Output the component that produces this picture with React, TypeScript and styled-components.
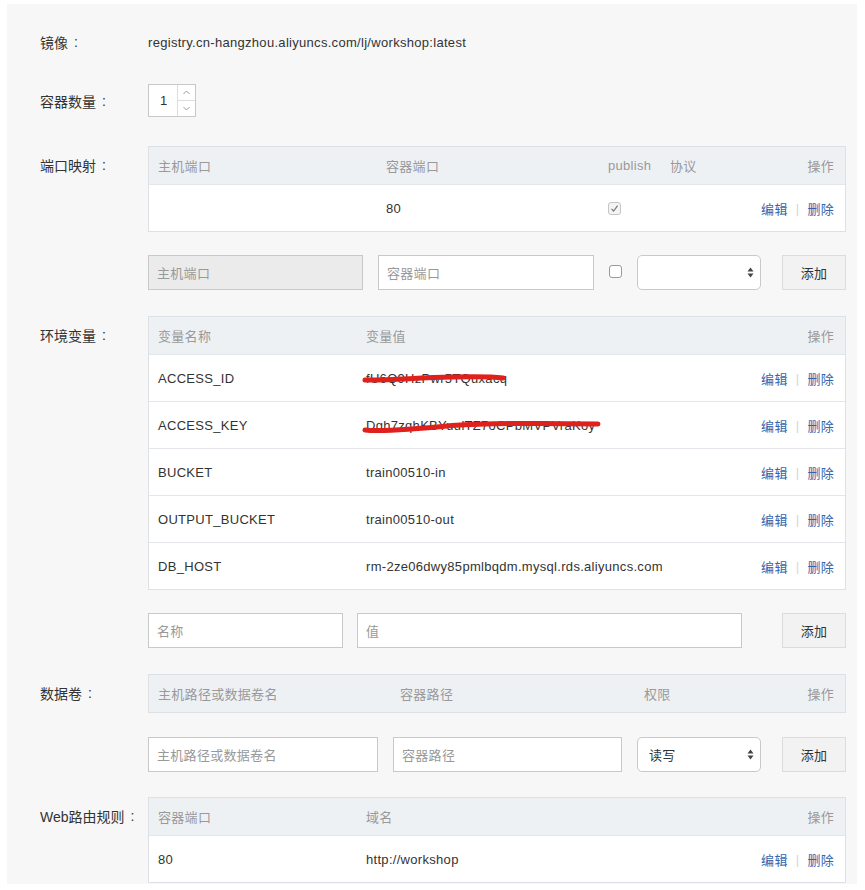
import React from 'react';
import styled, { createGlobalStyle } from 'styled-components';

const GlobalStyle = createGlobalStyle`
  body {
    margin: 0;
    background: #ffffff;
    font-family: "Liberation Sans", "Noto Sans CJK SC", sans-serif;
    color: #333;
    letter-spacing: 0.3px;
  }
`;

type PortRow = { host: string; container: string; publish: boolean };
type EnvRow = { name: string; value: string; masked?: 'short' | 'long' };
type WebRow = { port: string; domain: string };

const ports: PortRow[] = [{ host: '', container: '80', publish: true }];

const envs: EnvRow[] = [
  { name: 'ACCESS_ID', value: 'fU6Q9HzPwr5TQuxacq', masked: 'short' },
  { name: 'ACCESS_KEY', value: 'Dgh7zqhKBYuulTZ7oCPbMVPVraKoy', masked: 'long' },
  { name: 'BUCKET', value: 'train00510-in' },
  { name: 'OUTPUT_BUCKET', value: 'train00510-out' },
  { name: 'DB_HOST', value: 'rm-2ze06dwy85pmlbqdm.mysql.rds.aliyuncs.com' },
];

const routes: WebRow[] = [{ port: '80', domain: 'http://workshop' }];

function Actions() {
  return (
    <ActionGroup>
      <ActionLink>编辑</ActionLink>
      <ActionSep>|</ActionSep>
      <ActionLink>删除</ActionLink>
    </ActionGroup>
  );
}

function SelectCaret() {
  return (
    <svg width="7" height="11" viewBox="0 0 7 11">
      <path d="M3.5 0.5 L6.5 4.5 L0.5 4.5 Z" fill="#444" />
      <path d="M3.5 10.5 L6.5 6.5 L0.5 6.5 Z" fill="#444" />
    </svg>
  );
}

// scribble that hides the secret values
function Scribble({ kind }: { kind: 'short' | 'long' }) {
  if (kind === 'short') {
    return (
      <ScribbleSvg width="146" height="16" viewBox="0 0 146 16" style={{ left: -4, top: 0 }}>
        <path
          d="M3 9 C 30 9.5, 55 6.5, 90 6 C 115 5.5, 130 5.5, 141 7"
          stroke="#e0201c"
          strokeWidth="5"
          strokeLinecap="round"
          fill="none"
        />
      </ScribbleSvg>
    );
  }
  return (
    <ScribbleSvg width="240" height="18" viewBox="0 0 240 18" style={{ left: -4, top: 0 }}>
      <path
        d="M3 12 C 20 14, 55 11, 90 7.5 C 130 5, 180 5, 236 6"
        stroke="#e0201c"
        strokeWidth="5"
        strokeLinecap="round"
        fill="none"
      />
    </ScribbleSvg>
  );
}

export default function App() {
  return (
    <>
      <GlobalStyle />
      <Panel>
        {/* 镜像 */}
        <FormRow>
          <Label $h={28}>
            镜像<Colon>:</Colon>
          </Label>
          <ImageValue>registry.cn-hangzhou.aliyuncs.com/lj/workshop:latest</ImageValue>
        </FormRow>

        {/* 容器数量 */}
        <FormRow $mt={28}>
          <Label $h={33}>
            容器数量<Colon>:</Colon>
          </Label>
          <Spinner>
            <SpinnerValue>1</SpinnerValue>
            <SpinnerArrows>
              <SpinnerBtn>
                <svg width="7" height="5" viewBox="0 0 7 5">
                  <path d="M0.5 4 L3.5 1 L6.5 4" stroke="#999" fill="none" />
                </svg>
              </SpinnerBtn>
              <SpinnerBtn $bottom>
                <svg width="7" height="5" viewBox="0 0 7 5">
                  <path d="M0.5 1 L3.5 4 L6.5 1" stroke="#999" fill="none" />
                </svg>
              </SpinnerBtn>
            </SpinnerArrows>
          </Spinner>
        </FormRow>

        {/* 端口映射 */}
        <FormRow $mt={29}>
          <Label $h={38}>
            端口映射<Colon>:</Colon>
          </Label>
          <div>
            <Table>
              <HeadRow $cols="228px 222px 62px 1fr 100px">
                <Cell>主机端口</Cell>
                <Cell>容器端口</Cell>
                <Cell>publish</Cell>
                <Cell>协议</Cell>
                <Cell $right>操作</Cell>
              </HeadRow>
              {ports.map((p, i) => (
                <BodyRow key={i} $cols="228px 222px 62px 1fr 100px">
                  <Cell>{p.host}</Cell>
                  <Cell>{p.container}</Cell>
                  <Cell>
                    <CheckBox $checked={p.publish}>
                      {p.publish && (
                        <svg width="9" height="9" viewBox="0 0 9 9">
                          <path d="M1.5 4.8 L3.6 7 L7.6 1.6" stroke="#777" strokeWidth="1.2" fill="none" />
                        </svg>
                      )}
                    </CheckBox>
                  </Cell>
                  <Cell />
                  <Cell $right>
                    <Actions />
                  </Cell>
                </BodyRow>
              ))}
            </Table>
            <AddRow $cols="215px 216px 13px 124px 1fr" $gap={15}>
              <Field $disabled>主机端口</Field>
              <Field>容器端口</Field>
              <CheckBox />
              <SelectBox>
                <span />
                <SelectCaret />
              </SelectBox>
              <AddButton>添加</AddButton>
            </AddRow>
          </div>
        </FormRow>

        {/* 环境变量 */}
        <FormRow $mt={26}>
          <Label $h={38}>
            环境变量<Colon>:</Colon>
          </Label>
          <div>
            <Table>
              <HeadRow $cols="208px 1fr 120px">
                <Cell>变量名称</Cell>
                <Cell>变量值</Cell>
                <Cell $right>操作</Cell>
              </HeadRow>
              {envs.map((e) => (
                <BodyRow key={e.name} $cols="208px 1fr 120px">
                  <Cell>{e.name}</Cell>
                  <Cell>
                    <Secret>
                      {e.value}
                      {e.masked && <Scribble kind={e.masked} />}
                    </Secret>
                  </Cell>
                  <Cell $right>
                    <Actions />
                  </Cell>
                </BodyRow>
              ))}
            </Table>
            <AddRow $cols="195px 385px 1fr">
              <Field>名称</Field>
              <Field>值</Field>
              <AddButton>添加</AddButton>
            </AddRow>
          </div>
        </FormRow>

        {/* 数据卷 */}
        <FormRow $mt={26}>
          <Label $h={38}>
            数据卷<Colon>:</Colon>
          </Label>
          <div>
            <Table>
              <HeadRow $cols="242px 244px 1fr 120px">
                <Cell>主机路径或数据卷名</Cell>
                <Cell>容器路径</Cell>
                <Cell>权限</Cell>
                <Cell $right>操作</Cell>
              </HeadRow>
            </Table>
            <AddRow $cols="230px 229px 124px 1fr" $gap={15} $mt={24}>
              <Field>主机路径或数据卷名</Field>
              <Field>容器路径</Field>
              <SelectBox>
                <SelectText>读写</SelectText>
                <SelectCaret />
              </SelectBox>
              <AddButton>添加</AddButton>
            </AddRow>
          </div>
        </FormRow>

        {/* Web路由规则 */}
        <FormRow $mt={25}>
          <Label $h={38}>
            Web路由规则<Colon>:</Colon>
          </Label>
          <Table>
            <HeadRow $cols="208px 1fr 120px">
              <Cell>容器端口</Cell>
              <Cell>域名</Cell>
              <Cell $right>操作</Cell>
            </HeadRow>
            {routes.map((r, i) => (
              <BodyRow key={i} $cols="208px 1fr 120px">
                <Cell>{r.port}</Cell>
                <Cell>{r.domain}</Cell>
                <Cell $right>
                  <Actions />
                </Cell>
              </BodyRow>
            ))}
          </Table>
        </FormRow>
      </Panel>
    </>
  );
}

// Styled Components
const Panel = styled.div`
  width: 850px;
  box-sizing: border-box;
  margin: 4px 0 0 7px;
  padding: 24px 11px 1px 33px;
  background: #f7f7f7;
`;

const FormRow = styled.div<{ $mt?: number }>`
  display: grid;
  grid-template-columns: 108px 1fr;
  align-items: start;
  margin-top: ${(p) => p.$mt ?? 0}px;
`;

const Label = styled.div<{ $h: number }>`
  height: ${(p) => p.$h}px;
  display: flex;
  align-items: center;
  font-size: 14px;
  color: #333;
  white-space: nowrap;
  letter-spacing: 0;
`;

const Colon = styled.span`
  margin-left: 6px;
`;

const ImageValue = styled.div`
  height: 28px;
  display: flex;
  align-items: center;
  font-size: 13px;
  color: #333;
`;

const Spinner = styled.div`
  width: 48px;
  height: 33px;
  box-sizing: border-box;
  border: 1px solid #c8c8c8;
  background: #fff;
  display: flex;
`;

const SpinnerValue = styled.div`
  flex: 1;
  display: flex;
  align-items: center;
  padding-left: 11px;
  font-size: 13px;
  color: #333;
`;

const SpinnerArrows = styled.div`
  width: 17px;
  display: flex;
  flex-direction: column;
  border-left: 1px solid #ddd;
`;

const SpinnerBtn = styled.div<{ $bottom?: boolean }>`
  flex: 1;
  display: flex;
  align-items: center;
  justify-content: center;
  border-top: ${(p) => (p.$bottom ? '1px solid #ddd' : 'none')};
`;

const Table = styled.div`
  border: 1px solid #dde1e6;
  background: #fff;
`;

const HeadRow = styled.div<{ $cols: string }>`
  display: grid;
  grid-template-columns: ${(p) => p.$cols};
  height: 37px;
  align-items: center;
  background: #eef1f4;
  font-size: 13px;
  color: #999;
`;

const BodyRow = styled.div<{ $cols: string }>`
  display: grid;
  grid-template-columns: ${(p) => p.$cols};
  height: 46px;
  align-items: center;
  border-top: 1px solid #e3e6ea;
  font-size: 13px;
  color: #333;
`;

const Cell = styled.div<{ $right?: boolean }>`
  padding: ${(p) => (p.$right ? '0 11px 0 0' : '0 0 0 9px')};
  display: flex;
  align-items: center;
  justify-content: ${(p) => (p.$right ? 'flex-end' : 'flex-start')};
  white-space: nowrap;
`;

const Secret = styled.span`
  position: relative;
  display: inline-block;
`;

const ScribbleSvg = styled.svg`
  position: absolute;
  overflow: visible;
`;

const ActionGroup = styled.div`
  display: flex;
  align-items: center;
`;

const ActionLink = styled.span`
  color: #3464ad;
  font-size: 13px;
  cursor: pointer;
`;

const ActionSep = styled.span`
  color: #d5d5d5;
  margin: 0 8px;
  font-size: 13px;
`;

const CheckBox = styled.span<{ $checked?: boolean }>`
  width: 13px;
  height: 13px;
  box-sizing: border-box;
  border: 1px solid ${(p) => (p.$checked ? '#c4c4c4' : '#9a9a9a')};
  border-radius: 3px;
  background: ${(p) => (p.$checked ? '#f4f4f4' : '#fff')};
  display: inline-flex;
  align-items: center;
  justify-content: center;
  align-self: ${(p) => (p.$checked ? 'center' : 'start')};
  margin-top: ${(p) => (p.$checked ? 0 : 10)}px;
`;

const AddRow = styled.div<{ $cols: string; $mt?: number; $gap?: number }>`
  display: grid;
  grid-template-columns: ${(p) => p.$cols};
  column-gap: ${(p) => p.$gap ?? 14}px;
  align-items: stretch;
  height: 35px;
  margin-top: ${(p) => p.$mt ?? 23}px;
`;

const Field = styled.div<{ $disabled?: boolean }>`
  box-sizing: border-box;
  border: 1px solid #c9c9c9;
  background: ${(p) => (p.$disabled ? '#ebebeb' : '#fff')};
  padding-left: 8px;
  display: flex;
  align-items: center;
  font-size: 13px;
  color: #999;
`;

const SelectBox = styled.div`
  box-sizing: border-box;
  border: 1px solid #c9c9c9;
  border-radius: 5px;
  background: #fff;
  display: flex;
  align-items: center;
  justify-content: space-between;
  padding: 0 6px 0 11px;
`;

const SelectText = styled.span`
  font-size: 13px;
  color: #333;
`;

const AddButton = styled.div`
  justify-self: end;
  width: 64px;
  box-sizing: border-box;
  border: 1px solid #dcdcdc;
  background: #f2f2f2;
  display: flex;
  align-items: center;
  justify-content: center;
  font-size: 13px;
  color: #333;
`;
